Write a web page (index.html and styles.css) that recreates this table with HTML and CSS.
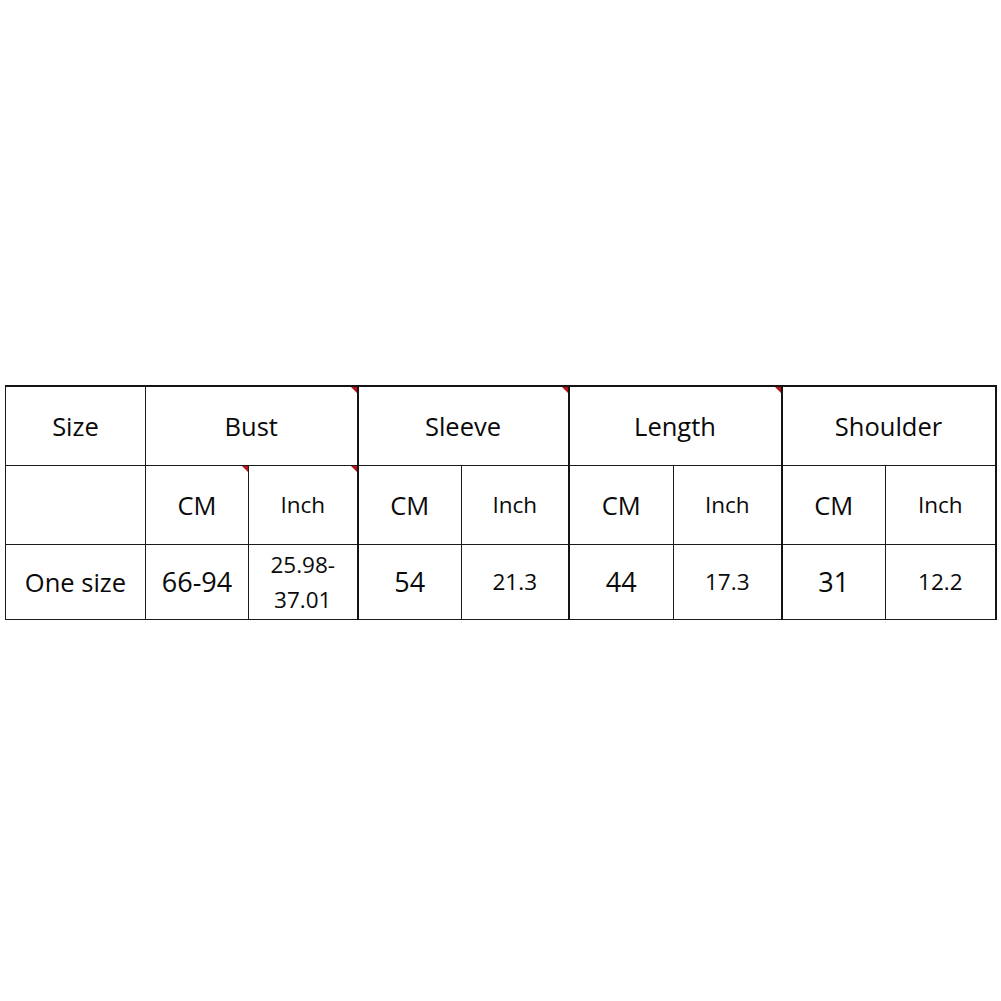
FILE: index.html
```html
<!DOCTYPE html>
<html>
<head>
<meta charset="utf-8">
<link rel="stylesheet" href="styles.css">
</head>
<body>
<div class="page">
<table class="sizes">
  <colgroup>
    <col class="c-size">
    <col class="c-a"><col class="c-b">
    <col class="c-c"><col class="c-d">
    <col class="c-e"><col class="c-f">
    <col class="c-g"><col class="c-h">
  </colgroup>
  <tr class="r-head">
    <td class="big">Size</td>
    <td class="big grp mark" colspan="2">Bust</td>
    <td class="big grp mark" colspan="2">Sleeve</td>
    <td class="big grp mark" colspan="2">Length</td>
    <td class="big grp" colspan="2">Shoulder</td>
  </tr>
  <tr class="r-unit">
    <td></td>
    <td class="big mark">CM</td>
    <td class="small grp mark">Inch</td>
    <td class="big">CM</td>
    <td class="small grp">Inch</td>
    <td class="big">CM</td>
    <td class="small grp">Inch</td>
    <td class="big">CM</td>
    <td class="small grp">Inch</td>
  </tr>
  <tr class="r-data">
    <td class="big">One size</td>
    <td class="num">66-94</td>
    <td class="small two grp">25.98-<br>37.01</td>
    <td class="num">54</td>
    <td class="small grp">21.3</td>
    <td class="num">44</td>
    <td class="small grp">17.3</td>
    <td class="num">31</td>
    <td class="small grp">12.2</td>
  </tr>
</table>
</div>
</body>
</html>
```

FILE: styles.css
```css
html, body {
  margin: 0;
  padding: 0;
  background: #ffffff;
}

.page {
  padding: 385px 0 0 5px;
}

.sizes {
  border-collapse: collapse;
  table-layout: fixed;
  width: 991px;
  font-family: "Open Sans", "Noto Sans", sans-serif;
  font-weight: 500;
  color: #0a0a0a;
  border-top: 2px solid #141414;
  border-left: 1px solid #141414;
  border-right: 2px solid #141414;
  border-bottom: 1px solid #141414;
}

.c-size { width: 140px; }
.c-a { width: 103px; }
.c-b { width: 109px; }
.c-c { width: 104px; }
.c-d { width: 107px; }
.c-e { width: 105px; }
.c-f { width: 108px; }
.c-g { width: 104px; }
.c-h { width: 110px; }

.sizes td {
  position: relative;
  border: 1px solid #1a1a1a;
  text-align: center;
  vertical-align: middle;
  padding: 0;
  white-space: nowrap;
}

.sizes td.grp {
  border-right: 2px solid #141414;
}

.r-head td { height: 78px; }
.r-unit td { height: 78px; }
.r-data td { height: 74px; }

.big {
  font-size: 25.5px;
  line-height: 30px;
}

.num {
  font-size: 27px;
  line-height: 30px;
}

.small {
  font-size: 22.5px;
  line-height: 30px;
}

.small.two {
  line-height: 35px;
}

.mark::after {
  content: "";
  position: absolute;
  top: 0;
  right: 0;
  width: 0;
  height: 0;
  border-top: 6px solid #b5121b;
  border-left: 6px solid transparent;
}
```
